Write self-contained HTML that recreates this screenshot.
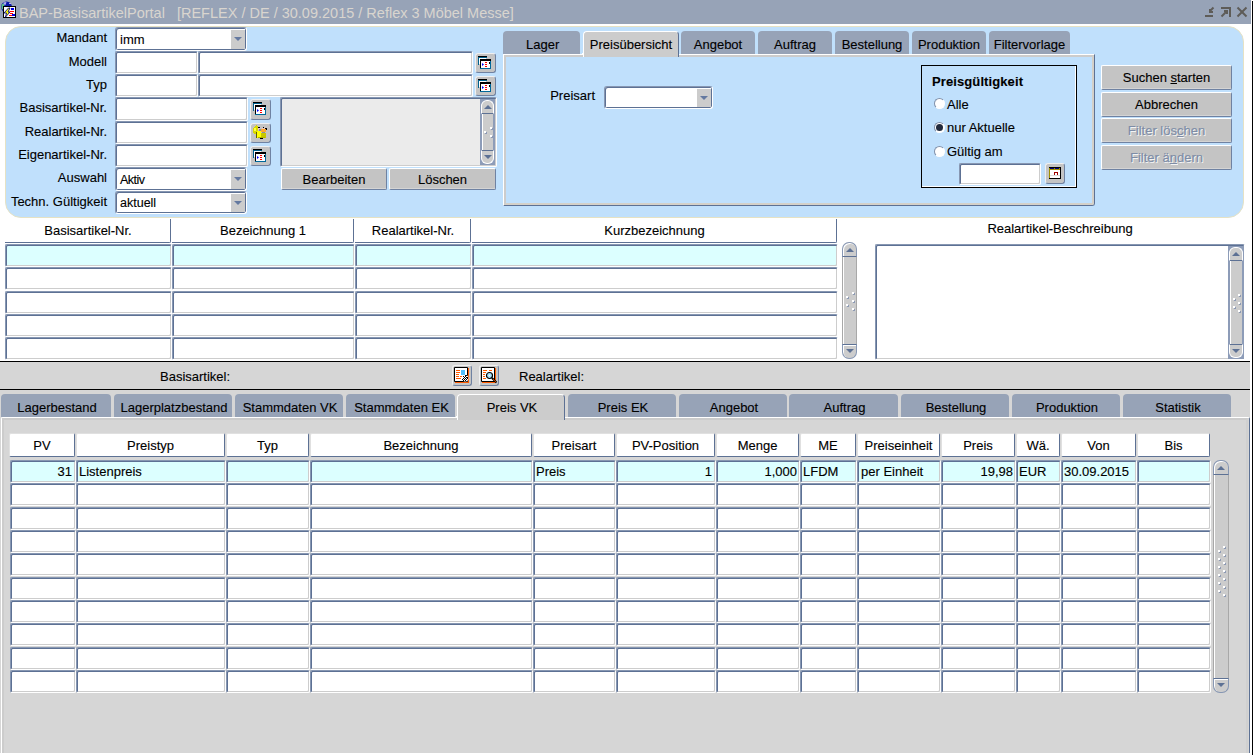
<!DOCTYPE html>
<html><head><meta charset="utf-8"><style>
*{margin:0;padding:0;box-sizing:content-box}
html,body{width:1253px;height:755px;overflow:hidden;background:#fff;position:relative}
body div{position:absolute}
.t{font-family:"Liberation Sans",sans-serif;font-size:13px;line-height:20px;white-space:pre;color:#000;-webkit-text-stroke:0.12px currentColor}
.fld{border-style:solid;border-width:1px;border-color:#8797b2 #fff #fff #8797b2;border-radius:2px;box-shadow:inset 1px 1px 0 #5d7194, inset -1px -1px 0 #cdcdcd}
.cmb{background:#fff;border-style:solid;border-width:1px;border-color:#8797b2 #fff #fff #8797b2;border-radius:3px;box-shadow:inset 1px 1px 0 #5d7194, inset -1px -1px 0 #5d7194}
.cbtn{right:1px;top:1px;width:14px;background:#cccccc}
.arr{left:3px;top:7px;width:0;height:0;border-left:4px solid transparent;border-right:4px solid transparent;border-top:4px solid #6479a0}
.btn{background:#c4c4c4;border:1px solid;border-color:#fff #6f82a2 #6f82a2 #fff;border-radius:2px;box-shadow:inset 0 -1px 0 #d4d4d4}
.ibtn{background:#c4c4c4;border:1px solid;border-color:#f0f0f0 #6f82a2 #6f82a2 #f0f0f0;border-radius:3px}
.tab{background:#97a3b7;border-radius:4px 4px 0 0}
.tabA{background:#cccccc;border-radius:4px 4px 0 0;border-style:solid;border-width:1px 1px 0 1px;border-color:#fff #5d7194 #fff #fff}
.vsu{background:#cccccc;border:1px solid #8797b3;border-bottom:1px solid #5d7194;border-radius:7px 7px 0 0;box-shadow:inset 1px 1px 0 #fff, 0 1px 0 #fff}
.vsd{background:#cccccc;border:1px solid #8797b3;border-top:1px solid #5d7194;border-radius:0 0 7px 7px;box-shadow:inset 1px 1px 0 #fff}
.vsuF{background:#cccccc;border:1px solid #fff;border-bottom:1px solid #5d7194;border-radius:6px 6px 0 0;box-shadow:0 1px 0 #fff}
.vsdF{background:#cccccc;border:1px solid #fff;border-top:1px solid #5d7194;border-radius:0 0 6px 6px}
.vst{background:#cccccc;border-left:1px solid #a8a8a8;border-right:1px solid #a8a8a8;box-shadow:inset 1px 0 0 #fff}
.au{width:0;height:0;border-left:4px solid transparent;border-right:4px solid transparent;border-bottom:4px solid #5d7194}
.ad{width:0;height:0;border-left:4px solid transparent;border-right:4px solid transparent;border-top:4px solid #5d7194}
u{text-decoration:underline;text-underline-offset:1px}
</style></head>
<body>
<div style="left:0px;top:0px;width:1251px;height:24px;background:#97a3b7"></div><div style="left:1251px;top:0px;width:1px;height:24px;background:#fff"></div><div style="left:1250px;top:24px;width:2px;height:731px;background:#fff"></div><div style="left:1252px;top:1px;width:1px;height:754px;background:#000"></div><svg width="20" height="20" style="position:absolute;left:0;top:0"><circle cx="6.5" cy="7" r="5.5" fill="#0a1aa8"/><path d="M1.5 5 Q2.5 3 4 3.5 L4.5 6 L3.5 10 L1.5 8.5 Z" fill="#5cc088"/><path d="M3.5 2.5 L6.5 2 L5.5 5 L4 4.5 Z" fill="#b8b0f0"/><rect x="9" y="3" width="2" height="1" fill="#b8b0f0"/><rect x="3" y="6" width="13" height="12" fill="#000"/><rect x="4" y="7" width="11" height="10" fill="#fff"/><path d="M8.5 8 L10 8 L8 12 L10 12 L5.5 17 L6.5 13 L4 13 Z" fill="#ffff00" stroke="#000080" stroke-width="0.9"/><rect x="11" y="8" width="3" height="2" fill="#0000e0"/><rect x="10" y="11" width="4" height="1" fill="#ff0000"/><rect x="10" y="13" width="3" height="1" fill="#ff0000"/><rect x="9" y="15" width="3" height="1" fill="#ff0000"/><rect x="12" y="14" width="3" height="2" fill="#0000e0"/></svg><div class="t" style="left:19px;top:3px;font-size:14.5px;color:#d9d5cf;font-weight:normal;-webkit-text-stroke:0">BAP-BasisartikelPortal &nbsp; [REFLEX / DE / 30.09.2015 / Reflex 3 Möbel Messe]</div><svg width="50" height="24" style="position:absolute;left:1200px;top:0"><g fill="#5e5c58"><rect x="5" y="15" width="8" height="2"/><rect x="9" y="9" width="2" height="4"/><rect x="9" y="11" width="4" height="2"/><rect x="21" y="7" width="10" height="2"/><rect x="29" y="7" width="2" height="10"/><rect x="24" y="10" width="4" height="2"/><rect x="26" y="10" width="2" height="4"/></g><g fill="none" stroke="#5e5c58" stroke-width="2"><path d="M13.5 7.5 L10 11"/><path d="M21.5 16.5 L27 11"/><path d="M37.5 7.5 L46.5 16.5"/><path d="M46.5 7.5 L37.5 16.5"/></g></svg><div style="left:5px;top:26px;width:1237px;height:190px;background:#c0e0fc;border:1px solid #e6e2c4;border-radius:16px"></div><div class="t" style="left:-193px;width:300px;text-align:right;top:28px;font-size:13px;color:#000;font-weight:normal;">Mandant</div><div class="t" style="left:-193px;width:300px;text-align:right;top:52px;font-size:13px;color:#000;font-weight:normal;">Modell</div><div class="t" style="left:-193px;width:300px;text-align:right;top:75px;font-size:13px;color:#000;font-weight:normal;">Typ</div><div class="t" style="left:-193px;width:300px;text-align:right;top:98px;font-size:13px;color:#000;font-weight:normal;">Basisartikel-Nr.</div><div class="t" style="left:-193px;width:300px;text-align:right;top:122px;font-size:13px;color:#000;font-weight:normal;">Realartikel-Nr.</div><div class="t" style="left:-193px;width:300px;text-align:right;top:145px;font-size:13px;color:#000;font-weight:normal;">Eigenartikel-Nr.</div><div class="t" style="left:-193px;width:300px;text-align:right;top:168px;font-size:13px;color:#000;font-weight:normal;">Auswahl</div><div class="t" style="left:-193px;width:300px;text-align:right;top:192px;font-size:13px;color:#000;font-weight:normal;">Techn. Gültigkeit</div><div class="cmb" style="left:115px;top:27px;width:130px;height:22px"><div class="cbtn" style="top:2px;right:1px;height:19px"><div class="arr"></div></div></div><div class="t" style="left:120px;top:30px;font-size:13px;color:#000;font-weight:normal;">imm</div><div class="fld" style="left:115px;top:51px;width:81px;height:21px;background:#fff"></div><div class="fld" style="left:198px;top:51px;width:273px;height:21px;background:#fff"></div><div class="fld" style="left:115px;top:74px;width:81px;height:21px;background:#fff"></div><div class="fld" style="left:198px;top:74px;width:273px;height:21px;background:#fff"></div><div class="ibtn" style="left:475px;top:53px;width:19px;height:18px"><svg width="21" height="21" style="position:absolute;left:-1px;top:-1px"><rect x="3" y="3" width="9" height="1" fill="#000"/><rect x="3" y="4" width="9" height="1" fill="#00608c"/><rect x="3" y="4" width="1" height="8" fill="#00608c"/><rect x="4" y="5" width="7" height="6" fill="#fff"/><rect x="5" y="6" width="11" height="2" fill="#000"/><rect x="5" y="8" width="11" height="8" fill="#00689a"/><rect x="5" y="8" width="1" height="7" fill="#000"/><rect x="6" y="8" width="8" height="7" fill="#fff"/><rect x="14" y="8" width="1" height="7" fill="#fff"/><rect x="14" y="9" width="1" height="2" fill="#000"/><path d="M7 10 L9 11.5 L7 13 Z" fill="#0000ff"/><rect x="10" y="9" width="2" height="1" fill="#f00"/><rect x="10" y="11" width="2" height="1" fill="#f00"/><rect x="10" y="13" width="2" height="1" fill="#f00"/></svg></div><div class="ibtn" style="left:475px;top:76px;width:19px;height:18px"><svg width="21" height="21" style="position:absolute;left:-1px;top:-1px"><rect x="3" y="3" width="9" height="1" fill="#000"/><rect x="3" y="4" width="9" height="1" fill="#00608c"/><rect x="3" y="4" width="1" height="8" fill="#00608c"/><rect x="4" y="5" width="7" height="6" fill="#fff"/><rect x="5" y="6" width="11" height="2" fill="#000"/><rect x="5" y="8" width="11" height="8" fill="#00689a"/><rect x="5" y="8" width="1" height="7" fill="#000"/><rect x="6" y="8" width="8" height="7" fill="#fff"/><rect x="14" y="8" width="1" height="7" fill="#fff"/><rect x="14" y="9" width="1" height="2" fill="#000"/><path d="M7 10 L9 11.5 L7 13 Z" fill="#0000ff"/><rect x="10" y="9" width="2" height="1" fill="#f00"/><rect x="10" y="11" width="2" height="1" fill="#f00"/><rect x="10" y="13" width="2" height="1" fill="#f00"/></svg></div><div class="fld" style="left:115px;top:97px;width:131px;height:22px;background:#fff"></div><div class="fld" style="left:115px;top:121px;width:131px;height:21px;background:#fff"></div><div class="fld" style="left:115px;top:144px;width:131px;height:21px;background:#fff"></div><div class="ibtn" style="left:250px;top:99px;width:19px;height:19px"><svg width="21" height="21" style="position:absolute;left:-1px;top:-1px"><rect x="3" y="3" width="9" height="1" fill="#000"/><rect x="3" y="4" width="9" height="1" fill="#00608c"/><rect x="3" y="4" width="1" height="8" fill="#00608c"/><rect x="4" y="5" width="7" height="6" fill="#fff"/><rect x="5" y="6" width="11" height="2" fill="#000"/><rect x="5" y="8" width="11" height="8" fill="#00689a"/><rect x="5" y="8" width="1" height="7" fill="#000"/><rect x="6" y="8" width="8" height="7" fill="#fff"/><rect x="14" y="8" width="1" height="7" fill="#fff"/><rect x="14" y="9" width="1" height="2" fill="#000"/><path d="M7 10 L9 11.5 L7 13 Z" fill="#0000ff"/><rect x="10" y="9" width="2" height="1" fill="#f00"/><rect x="10" y="11" width="2" height="1" fill="#f00"/><rect x="10" y="13" width="2" height="1" fill="#f00"/></svg></div><div class="ibtn" style="left:250px;top:123px;width:19px;height:18px"><svg width="21" height="21" style="position:absolute;left:-1px;top:-1px" shape-rendering="crispEdges"><g fill="#d8d800"><rect x="6" y="2" width="1" height="1"/><rect x="5" y="3" width="3" height="1"/><rect x="4" y="4" width="4" height="1"/><rect x="3" y="5" width="5" height="4"/><rect x="3" y="9" width="3" height="1"/><rect x="4" y="10" width="2" height="1"/></g><rect x="4" y="5" width="2" height="3" fill="#ffff40"/><rect x="8" y="4" width="2" height="1" fill="#000"/><rect x="8" y="5" width="2" height="2" fill="#f8c8b8"/><rect x="13" y="4" width="1" height="1" fill="#000"/><rect x="12" y="5" width="3" height="1" fill="#f8c8b8"/><rect x="15" y="5" width="2" height="1" fill="#000"/><rect x="11" y="6" width="5" height="3" fill="#ffa830"/><rect x="16" y="6" width="1" height="1" fill="#000"/><rect x="9" y="6" width="2" height="3" fill="#8890a0"/><rect x="12" y="9" width="3" height="1" fill="#8890a0"/><rect x="7" y="8" width="4" height="7" fill="#ffff00"/><rect x="11" y="10" width="5" height="5" fill="#c8c800"/><rect x="8" y="14" width="7" height="1" fill="#b0b000"/><rect x="10" y="15" width="3" height="1" fill="#000"/><rect x="6" y="9" width="1" height="6" fill="#606000"/></svg></div><div class="ibtn" style="left:250px;top:146px;width:19px;height:18px"><svg width="21" height="21" style="position:absolute;left:-1px;top:-1px"><rect x="3" y="3" width="9" height="1" fill="#000"/><rect x="3" y="4" width="9" height="1" fill="#00608c"/><rect x="3" y="4" width="1" height="8" fill="#00608c"/><rect x="4" y="5" width="7" height="6" fill="#fff"/><rect x="5" y="6" width="11" height="2" fill="#000"/><rect x="5" y="8" width="11" height="8" fill="#00689a"/><rect x="5" y="8" width="1" height="7" fill="#000"/><rect x="6" y="8" width="8" height="7" fill="#fff"/><rect x="14" y="8" width="1" height="7" fill="#fff"/><rect x="14" y="9" width="1" height="2" fill="#000"/><path d="M7 10 L9 11.5 L7 13 Z" fill="#0000ff"/><rect x="10" y="9" width="2" height="1" fill="#f00"/><rect x="10" y="11" width="2" height="1" fill="#f00"/><rect x="10" y="13" width="2" height="1" fill="#f00"/></svg></div><div class="cmb" style="left:115px;top:167px;width:130px;height:22px"><div class="cbtn" style="top:2px;right:1px;height:19px"><div class="arr"></div></div></div><div class="cmb" style="left:115px;top:191px;width:130px;height:21px"><div class="cbtn" style="top:2px;right:1px;height:18px"><div class="arr"></div></div></div><div class="t" style="left:120px;top:170px;font-size:12.5px;color:#000;font-weight:normal;letter-spacing:-0.5px">Aktiv</div><div class="t" style="left:120px;top:193px;font-size:12.5px;color:#000;font-weight:normal;">aktuell</div><div class="fld" style="left:280px;top:97px;width:215px;height:68px;background:#ebebeb"></div><div style="left:480px;top:99px;width:15px;height:66px;background:#8d9cb8"></div><div class="vsuF" style="left:481px;top:100px;width:11px;height:12px"></div><div class="vst" style="left:481px;top:114px;width:11px;height:36px;border-color:#8d9cb8"></div><div class="vsdF" style="left:481px;top:150px;width:11px;height:12px"></div><div class="au" style="left:484px;top:105px"></div><div class="ad" style="left:484px;top:155px"></div><div style="left:490px;top:127px;width:2px;height:2px;background:#fff;box-shadow:1px 1px 0 #8d9ab4"></div><div style="left:484px;top:131px;width:2px;height:2px;background:#fff;box-shadow:1px 1px 0 #8d9ab4"></div><div style="left:490px;top:135px;width:2px;height:2px;background:#fff;box-shadow:1px 1px 0 #8d9ab4"></div><div class="btn" style="left:281px;top:168px;width:104px;height:20px"></div><div class="t" style="left:281px;width:106px;text-align:center;top:170px;font-size:13px;color:#000;font-weight:normal;">Bearbeiten</div><div class="btn" style="left:389px;top:168px;width:105px;height:20px"></div><div class="t" style="left:389px;width:107px;text-align:center;top:170px;font-size:13px;color:#000;font-weight:normal;">Löschen</div><div class="tab" style="left:503px;top:31px;width:77px;height:23px"></div><div class="tab" style="left:681px;top:31px;width:74px;height:23px"></div><div class="tab" style="left:758px;top:31px;width:74px;height:23px"></div><div class="tab" style="left:835px;top:31px;width:74px;height:23px"></div><div class="tab" style="left:912px;top:31px;width:74px;height:23px"></div><div class="tab" style="left:989px;top:31px;width:81px;height:23px"></div><div style="left:503px;top:54px;width:590px;height:150px;border-style:solid;border-width:1px;border-color:#fff #5d7194 #5d7194 #fff;border-radius:0 0 3px 0"></div><div style="left:504px;top:55px;width:586px;height:146px;background:#c0e0fc;border-style:solid;border-width:2px;border-color:#cccccc #d4d0c8 #d4d0c8 #cccccc;border-radius:0 0 2px 0"></div><div class="tabA" style="left:583px;top:31px;width:94px;height:25px"></div><div style="left:582px;top:53px;width:1px;height:1px;background:#fff"></div><div style="left:678px;top:52px;width:1px;height:2px;background:#5d7194"></div><div class="t" style="left:526px;top:35px;font-size:13px;color:#000;font-weight:normal;">Lager</div><div class="t" style="left:584px;width:94px;text-align:center;top:35px;font-size:13px;color:#000;font-weight:normal;">Preisübersicht</div><div class="t" style="left:681px;width:74px;text-align:center;top:35px;font-size:13px;color:#000;font-weight:normal;">Angebot</div><div class="t" style="left:758px;width:74px;text-align:center;top:35px;font-size:13px;color:#000;font-weight:normal;">Auftrag</div><div class="t" style="left:835px;width:74px;text-align:center;top:35px;font-size:13px;color:#000;font-weight:normal;">Bestellung</div><div class="t" style="left:912px;width:74px;text-align:center;top:35px;font-size:13px;color:#000;font-weight:normal;">Produktion</div><div class="t" style="left:989px;width:81px;text-align:center;top:35px;font-size:13px;color:#000;font-weight:normal;">Filtervorlage</div><div class="t" style="left:295px;width:300px;text-align:right;top:86px;font-size:13px;color:#000;font-weight:normal;">Preisart</div><div class="cmb" style="left:604px;top:86px;width:107px;height:21px"><div class="cbtn" style="top:2px;right:1px;height:18px"><div class="arr"></div></div></div><div style="left:921px;top:65px;width:154px;height:121px;border:1px solid #000;box-shadow:inset -1px -1px 0 #fff"></div><div class="t" style="left:932px;top:72px;font-size:13px;color:#000;font-weight:bold;letter-spacing:0.1px">Preisgültigkeit</div><div style="left:934px;top:98px;width:9px;height:9px;border-radius:50%;background:#fff;border:1px solid;border-color:#8090aa #fff #fff #8090aa"></div><div class="t" style="left:947px;top:94.5px;font-size:13px;color:#000;font-weight:normal;">Alle</div><div style="left:934px;top:122px;width:9px;height:9px;border-radius:50%;background:#fff;border:1px solid;border-color:#8090aa #fff #fff #8090aa"></div><div style="left:936px;top:124px;width:7px;height:7px;border-radius:50%;background:#222a3c"></div><div class="t" style="left:947px;top:117.5px;font-size:13px;color:#000;font-weight:normal;">nur Aktuelle</div><div style="left:934px;top:146px;width:9px;height:9px;border-radius:50%;background:#fff;border:1px solid;border-color:#8090aa #fff #fff #8090aa"></div><div class="t" style="left:947px;top:141.5px;font-size:13px;color:#000;font-weight:normal;">Gültig am</div><div class="fld" style="left:959px;top:163px;width:80px;height:20px;background:#fff"></div><div class="ibtn" style="left:1045px;top:163px;width:18px;height:19px"><svg width="20" height="21" style="position:absolute;left:-1px;top:-1px"><rect x="4" y="4" width="12" height="12" fill="#000"/><rect x="4" y="5" width="11" height="10" fill="#fff"/><rect x="4" y="5" width="1" height="10" fill="#a09000"/><rect x="5" y="5" width="10" height="2" fill="#a09000"/><rect x="5" y="5" width="4" height="1" fill="#000080"/><rect x="10" y="5" width="4" height="1" fill="#000080"/><rect x="9" y="9" width="4" height="4" fill="#a00000"/><rect x="10" y="10" width="2" height="2" fill="#fff"/><rect x="5" y="12" width="10" height="1" fill="#dddddd"/></svg></div><div class="btn" style="left:1101px;top:65px;width:129px;height:23px"></div><div class="t" style="left:1101px;width:131px;text-align:center;top:68px;font-size:13px;color:#000;font-weight:normal;">Suchen <u>s</u>tarten</div><div class="btn" style="left:1101px;top:92px;width:129px;height:23px"></div><div class="t" style="left:1101px;width:131px;text-align:center;top:95px;font-size:13px;color:#000;font-weight:normal;">Abbrechen</div><div class="btn" style="left:1101px;top:118px;width:129px;height:23px"></div><div class="t" style="left:1101px;width:131px;text-align:center;top:121px;font-size:13px;color:#7d8ca6;font-weight:normal;text-shadow:1px 1px 0 #f4f4f4;">Filter lös<u>c</u>hen</div><div class="btn" style="left:1101px;top:145px;width:129px;height:23px"></div><div class="t" style="left:1101px;width:131px;text-align:center;top:148px;font-size:13px;color:#7d8ca6;font-weight:normal;text-shadow:1px 1px 0 #f4f4f4;">Filter ä<u>n</u>dern</div><div style="left:5px;top:219px;width:165px;height:23px;border-right:1px solid #5d7194;border-bottom:1px solid #5d7194;border-radius:0 0 2px 0"></div><div class="t" style="left:5px;width:166px;text-align:center;top:221px;font-size:13px;color:#000;font-weight:normal;">Basisartikel-Nr.</div><div style="left:172px;top:219px;width:181px;height:23px;border-right:1px solid #5d7194;border-bottom:1px solid #5d7194;border-radius:0 0 2px 0"></div><div class="t" style="left:172px;width:182px;text-align:center;top:221px;font-size:13px;color:#000;font-weight:normal;">Bezeichnung 1</div><div style="left:355px;top:219px;width:115px;height:23px;border-right:1px solid #5d7194;border-bottom:1px solid #5d7194;border-radius:0 0 2px 0"></div><div class="t" style="left:355px;width:116px;text-align:center;top:221px;font-size:13px;color:#000;font-weight:normal;">Realartikel-Nr.</div><div style="left:472px;top:219px;width:364px;height:23px;border-right:1px solid #5d7194;border-bottom:1px solid #5d7194;border-radius:0 0 2px 0"></div><div class="t" style="left:472px;width:365px;text-align:center;top:221px;font-size:13px;color:#000;font-weight:normal;">Kurzbezeichnung</div><div class="fld" style="left:5px;top:244px;width:165px;height:21px;background:#dcffff"></div><div class="fld" style="left:172px;top:244px;width:181px;height:21px;background:#dcffff"></div><div class="fld" style="left:355px;top:244px;width:115px;height:21px;background:#dcffff"></div><div class="fld" style="left:472px;top:244px;width:364px;height:21px;background:#dcffff"></div><div class="fld" style="left:5px;top:267px;width:165px;height:21px;background:#fff"></div><div class="fld" style="left:172px;top:267px;width:181px;height:21px;background:#fff"></div><div class="fld" style="left:355px;top:267px;width:115px;height:21px;background:#fff"></div><div class="fld" style="left:472px;top:267px;width:364px;height:21px;background:#fff"></div><div class="fld" style="left:5px;top:291px;width:165px;height:21px;background:#fff"></div><div class="fld" style="left:172px;top:291px;width:181px;height:21px;background:#fff"></div><div class="fld" style="left:355px;top:291px;width:115px;height:21px;background:#fff"></div><div class="fld" style="left:472px;top:291px;width:364px;height:21px;background:#fff"></div><div class="fld" style="left:5px;top:314px;width:165px;height:21px;background:#fff"></div><div class="fld" style="left:172px;top:314px;width:181px;height:21px;background:#fff"></div><div class="fld" style="left:355px;top:314px;width:115px;height:21px;background:#fff"></div><div class="fld" style="left:472px;top:314px;width:364px;height:21px;background:#fff"></div><div class="fld" style="left:5px;top:337px;width:165px;height:21px;background:#fff"></div><div class="fld" style="left:172px;top:337px;width:181px;height:21px;background:#fff"></div><div class="fld" style="left:355px;top:337px;width:115px;height:21px;background:#fff"></div><div class="fld" style="left:472px;top:337px;width:364px;height:21px;background:#fff"></div><div class="vsu" style="left:842px;top:242px;width:13px;height:13px"></div><div class="vst" style="left:842px;top:257px;width:13px;height:87px"></div><div class="vsd" style="left:842px;top:344px;width:13px;height:13px"></div><div class="au" style="left:846px;top:248px"></div><div class="ad" style="left:846px;top:349px"></div><div style="left:852px;top:292px;width:2px;height:2px;background:#fff;box-shadow:1px 1px 0 #8d9ab4"></div><div style="left:846px;top:296px;width:2px;height:2px;background:#fff;box-shadow:1px 1px 0 #8d9ab4"></div><div style="left:852px;top:300px;width:2px;height:2px;background:#fff;box-shadow:1px 1px 0 #8d9ab4"></div><div style="left:846px;top:304px;width:2px;height:2px;background:#fff;box-shadow:1px 1px 0 #8d9ab4"></div><div style="left:852px;top:308px;width:2px;height:2px;background:#fff;box-shadow:1px 1px 0 #8d9ab4"></div><div class="t" style="left:876px;width:368px;text-align:center;top:219px;font-size:13px;color:#000;font-weight:normal;">Realartikel-Beschreibung</div><div class="fld" style="left:875px;top:244px;width:368px;height:114px;background:#fff"></div><div style="left:1228px;top:246px;width:16px;height:113px;background:#8d9cb8"></div><div class="vsuF" style="left:1229px;top:247px;width:12px;height:12px"></div><div class="vst" style="left:1229px;top:261px;width:12px;height:83px;border-color:#8d9cb8"></div><div class="vsdF" style="left:1229px;top:344px;width:12px;height:12px"></div><div class="au" style="left:1232px;top:252px"></div><div class="ad" style="left:1232px;top:349px"></div><div style="left:1238px;top:294px;width:2px;height:2px;background:#fff;box-shadow:1px 1px 0 #8d9ab4"></div><div style="left:1233px;top:298px;width:2px;height:2px;background:#fff;box-shadow:1px 1px 0 #8d9ab4"></div><div style="left:1238px;top:302px;width:2px;height:2px;background:#fff;box-shadow:1px 1px 0 #8d9ab4"></div><div style="left:1233px;top:306px;width:2px;height:2px;background:#fff;box-shadow:1px 1px 0 #8d9ab4"></div><div style="left:1238px;top:310px;width:2px;height:2px;background:#fff;box-shadow:1px 1px 0 #8d9ab4"></div><div style="left:0px;top:361px;width:1250px;height:394px;background:#d6d6d6"></div><div style="left:0px;top:361px;width:1250px;height:1px;background:#000"></div><div style="left:0px;top:389px;width:1250px;height:1px;background:#000"></div><div class="t" style="left:160px;top:367px;font-size:13px;color:#000;font-weight:normal;">Basisartikel:</div><div class="ibtn" style="left:452px;top:365px;width:18px;height:19px"><svg width="20" height="21" style="position:absolute;left:-1px;top:-1px"><rect x="2" y="2" width="14" height="15" rx="1" fill="#000"/><rect x="3" y="3" width="12" height="13" fill="#fff"/><rect x="16" y="3" width="1" height="15" fill="#ff5a00"/><rect x="3" y="17" width="14" height="1" fill="#ff5a00"/><rect x="4" y="5" width="4" height="1" fill="#ff5a00"/><rect x="4" y="7" width="4" height="1" fill="#ff5a00"/><rect x="4" y="9" width="3" height="1" fill="#ff5a00"/><rect x="4" y="11" width="3" height="1" fill="#ff5a00"/><rect x="8" y="11" width="2" height="1" fill="#ff5a00"/><rect x="4" y="13" width="5" height="1" fill="#ff5a00"/><rect x="9" y="5" width="4" height="5" fill="#50c0ff"/><circle cx="13.2" cy="13.2" r="3.2" fill="#fff"/><g fill="#000"><rect x="11" y="11" width="1" height="1"/><rect x="13" y="11" width="1" height="1"/><rect x="12" y="12" width="1" height="1"/><rect x="14" y="12" width="1" height="1"/><rect x="11" y="13" width="1" height="1"/><rect x="13" y="13" width="1" height="1"/><rect x="10" y="14" width="1" height="1"/><rect x="12" y="14" width="1" height="1"/><rect x="14" y="14" width="1" height="1"/><rect x="11" y="15" width="1" height="1"/><rect x="13" y="15" width="1" height="1"/><rect x="13" y="10" width="2" height="1"/><rect x="15" y="12" width="1" height="2"/></g></svg></div><div class="ibtn" style="left:479px;top:365px;width:18px;height:19px"><svg width="20" height="21" style="position:absolute;left:-1px;top:-1px"><rect x="2" y="2" width="14" height="15" rx="1" fill="#000"/><rect x="3" y="3" width="12" height="13" fill="#fff"/><rect x="16" y="3" width="1" height="15" fill="#ff5a00"/><rect x="3" y="17" width="14" height="1" fill="#ff5a00"/><rect x="4" y="5" width="4" height="1" fill="#ff5a00"/><rect x="10" y="5" width="3" height="1" fill="#ff5a00"/><rect x="4" y="7" width="3" height="1" fill="#ff5a00"/><rect x="4" y="9" width="2" height="1" fill="#ff5a00"/><rect x="4" y="11" width="2" height="1" fill="#ff5a00"/><rect x="4" y="13" width="3" height="1" fill="#ff5a00"/><circle cx="10.5" cy="10.5" r="3" fill="#a8e4ff" stroke="#000" stroke-width="1.2"/><rect x="10" y="10" width="1" height="1" fill="#fff"/><path d="M13 13 L17.5 17.5" stroke="#000" stroke-width="1.8"/><path d="M14 14 L17 17" stroke="#ff5a00" stroke-width="0.7"/></svg></div><div class="t" style="left:519px;top:367px;font-size:13px;color:#000;font-weight:normal;">Realartikel:</div><div class="tab" style="left:1px;top:394px;width:110px;height:23px"></div><div class="tab" style="left:114px;top:394px;width:118px;height:23px"></div><div class="tab" style="left:235px;top:394px;width:108px;height:23px"></div><div class="tab" style="left:346px;top:394px;width:109px;height:23px"></div><div class="tab" style="left:568px;top:394px;width:108px;height:23px"></div><div class="tab" style="left:679px;top:394px;width:108px;height:23px"></div><div class="tab" style="left:789px;top:394px;width:109px;height:23px"></div><div class="tab" style="left:901px;top:394px;width:108px;height:23px"></div><div class="tab" style="left:1012px;top:394px;width:108px;height:23px"></div><div class="tab" style="left:1123px;top:394px;width:108px;height:23px"></div><div style="left:1px;top:417px;width:1247px;height:335px;border-style:solid;border-width:1px 1px 0 1px;border-color:#fff #5d7194 #fff #fff;border-radius:2px 2px 0 0"></div><div style="left:2px;top:418px;width:1242px;height:333px;background:#d6d6d6;border-style:solid;border-width:2px 2px 1px 2px;border-color:#cccccc #d0d0d0 #d0d0d0 #cccccc"></div><div style="left:0px;top:753px;width:1250px;height:2px;background:#fff"></div><div class="tabA" style="left:457px;top:394px;width:106px;height:25px"></div><div style="left:456px;top:416px;width:1px;height:1px;background:#fff"></div><div style="left:564px;top:415px;width:1px;height:2px;background:#5d7194"></div><div class="t" style="left:2px;width:110px;text-align:center;top:398px;font-size:13px;color:#000;font-weight:normal;">Lagerbestand</div><div class="t" style="left:115px;width:118px;text-align:center;top:398px;font-size:13px;color:#000;font-weight:normal;">Lagerplatzbestand</div><div class="t" style="left:236px;width:108px;text-align:center;top:398px;font-size:13px;color:#000;font-weight:normal;">Stammdaten VK</div><div class="t" style="left:347px;width:109px;text-align:center;top:398px;font-size:13px;color:#000;font-weight:normal;">Stammdaten EK</div><div class="t" style="left:458px;width:108px;text-align:center;top:398px;font-size:13px;color:#000;font-weight:normal;">Preis VK</div><div class="t" style="left:569px;width:108px;text-align:center;top:398px;font-size:13px;color:#000;font-weight:normal;">Preis EK</div><div class="t" style="left:680px;width:108px;text-align:center;top:398px;font-size:13px;color:#000;font-weight:normal;">Angebot</div><div class="t" style="left:790px;width:109px;text-align:center;top:398px;font-size:13px;color:#000;font-weight:normal;">Auftrag</div><div class="t" style="left:902px;width:108px;text-align:center;top:398px;font-size:13px;color:#000;font-weight:normal;">Bestellung</div><div class="t" style="left:1013px;width:108px;text-align:center;top:398px;font-size:13px;color:#000;font-weight:normal;">Produktion</div><div class="t" style="left:1124px;width:108px;text-align:center;top:398px;font-size:13px;color:#000;font-weight:normal;">Statistik</div><div style="left:9px;top:433px;width:64px;height:22px;background:#fff;border:1px solid;border-color:#e0e0e0 #5d7194 #5d7194 #e0e0e0;border-radius:2px"></div><div class="t" style="left:9px;width:66px;text-align:center;top:436px;font-size:13px;color:#000;font-weight:normal;">PV</div><div style="left:76px;top:433px;width:147px;height:22px;background:#fff;border:1px solid;border-color:#e0e0e0 #5d7194 #5d7194 #e0e0e0;border-radius:2px"></div><div class="t" style="left:76px;width:149px;text-align:center;top:436px;font-size:13px;color:#000;font-weight:normal;">Preistyp</div><div style="left:226px;top:433px;width:81px;height:22px;background:#fff;border:1px solid;border-color:#e0e0e0 #5d7194 #5d7194 #e0e0e0;border-radius:2px"></div><div class="t" style="left:226px;width:83px;text-align:center;top:436px;font-size:13px;color:#000;font-weight:normal;">Typ</div><div style="left:310px;top:433px;width:220px;height:22px;background:#fff;border:1px solid;border-color:#e0e0e0 #5d7194 #5d7194 #e0e0e0;border-radius:2px"></div><div class="t" style="left:310px;width:222px;text-align:center;top:436px;font-size:13px;color:#000;font-weight:normal;">Bezeichnung</div><div style="left:533px;top:433px;width:80px;height:22px;background:#fff;border:1px solid;border-color:#e0e0e0 #5d7194 #5d7194 #e0e0e0;border-radius:2px"></div><div class="t" style="left:533px;width:82px;text-align:center;top:436px;font-size:13px;color:#000;font-weight:normal;">Preisart</div><div style="left:616px;top:433px;width:97px;height:22px;background:#fff;border:1px solid;border-color:#e0e0e0 #5d7194 #5d7194 #e0e0e0;border-radius:2px"></div><div class="t" style="left:616px;width:99px;text-align:center;top:436px;font-size:13px;color:#000;font-weight:normal;">PV-Position</div><div style="left:716px;top:433px;width:81px;height:22px;background:#fff;border:1px solid;border-color:#e0e0e0 #5d7194 #5d7194 #e0e0e0;border-radius:2px"></div><div class="t" style="left:716px;width:83px;text-align:center;top:436px;font-size:13px;color:#000;font-weight:normal;">Menge</div><div style="left:800px;top:433px;width:54px;height:22px;background:#fff;border:1px solid;border-color:#e0e0e0 #5d7194 #5d7194 #e0e0e0;border-radius:2px"></div><div class="t" style="left:800px;width:56px;text-align:center;top:436px;font-size:13px;color:#000;font-weight:normal;">ME</div><div style="left:857px;top:433px;width:81px;height:22px;background:#fff;border:1px solid;border-color:#e0e0e0 #5d7194 #5d7194 #e0e0e0;border-radius:2px"></div><div class="t" style="left:857px;width:83px;text-align:center;top:436px;font-size:13px;color:#000;font-weight:normal;">Preiseinheit</div><div style="left:941px;top:433px;width:72px;height:22px;background:#fff;border:1px solid;border-color:#e0e0e0 #5d7194 #5d7194 #e0e0e0;border-radius:2px"></div><div class="t" style="left:941px;width:74px;text-align:center;top:436px;font-size:13px;color:#000;font-weight:normal;">Preis</div><div style="left:1016px;top:433px;width:42px;height:22px;background:#fff;border:1px solid;border-color:#e0e0e0 #5d7194 #5d7194 #e0e0e0;border-radius:2px"></div><div class="t" style="left:1016px;width:44px;text-align:center;top:436px;font-size:13px;color:#000;font-weight:normal;">Wä.</div><div style="left:1061px;top:433px;width:73px;height:22px;background:#fff;border:1px solid;border-color:#e0e0e0 #5d7194 #5d7194 #e0e0e0;border-radius:2px"></div><div class="t" style="left:1061px;width:75px;text-align:center;top:436px;font-size:13px;color:#000;font-weight:normal;">Von</div><div style="left:1137px;top:433px;width:71px;height:22px;background:#fff;border:1px solid;border-color:#e0e0e0 #5d7194 #5d7194 #e0e0e0;border-radius:2px"></div><div class="t" style="left:1137px;width:73px;text-align:center;top:436px;font-size:13px;color:#000;font-weight:normal;">Bis</div><div class="fld" style="left:10px;top:460px;width:64px;height:21px;background:#dcffff"></div><div class="fld" style="left:76px;top:460px;width:148px;height:21px;background:#dcffff"></div><div class="fld" style="left:226px;top:460px;width:82px;height:21px;background:#dcffff"></div><div class="fld" style="left:310px;top:460px;width:221px;height:21px;background:#dcffff"></div><div class="fld" style="left:533px;top:460px;width:81px;height:21px;background:#dcffff"></div><div class="fld" style="left:616px;top:460px;width:98px;height:21px;background:#dcffff"></div><div class="fld" style="left:716px;top:460px;width:82px;height:21px;background:#dcffff"></div><div class="fld" style="left:800px;top:460px;width:55px;height:21px;background:#dcffff"></div><div class="fld" style="left:857px;top:460px;width:82px;height:21px;background:#dcffff"></div><div class="fld" style="left:941px;top:460px;width:73px;height:21px;background:#dcffff"></div><div class="fld" style="left:1016px;top:460px;width:43px;height:21px;background:#dcffff"></div><div class="fld" style="left:1061px;top:460px;width:74px;height:21px;background:#dcffff"></div><div class="fld" style="left:1137px;top:460px;width:72px;height:21px;background:#dcffff"></div><div class="fld" style="left:10px;top:483px;width:64px;height:21px;background:#fff"></div><div class="fld" style="left:76px;top:483px;width:148px;height:21px;background:#fff"></div><div class="fld" style="left:226px;top:483px;width:82px;height:21px;background:#fff"></div><div class="fld" style="left:310px;top:483px;width:221px;height:21px;background:#fff"></div><div class="fld" style="left:533px;top:483px;width:81px;height:21px;background:#fff"></div><div class="fld" style="left:616px;top:483px;width:98px;height:21px;background:#fff"></div><div class="fld" style="left:716px;top:483px;width:82px;height:21px;background:#fff"></div><div class="fld" style="left:800px;top:483px;width:55px;height:21px;background:#fff"></div><div class="fld" style="left:857px;top:483px;width:82px;height:21px;background:#fff"></div><div class="fld" style="left:941px;top:483px;width:73px;height:21px;background:#fff"></div><div class="fld" style="left:1016px;top:483px;width:43px;height:21px;background:#fff"></div><div class="fld" style="left:1061px;top:483px;width:74px;height:21px;background:#fff"></div><div class="fld" style="left:1137px;top:483px;width:72px;height:21px;background:#fff"></div><div class="fld" style="left:10px;top:507px;width:64px;height:21px;background:#fff"></div><div class="fld" style="left:76px;top:507px;width:148px;height:21px;background:#fff"></div><div class="fld" style="left:226px;top:507px;width:82px;height:21px;background:#fff"></div><div class="fld" style="left:310px;top:507px;width:221px;height:21px;background:#fff"></div><div class="fld" style="left:533px;top:507px;width:81px;height:21px;background:#fff"></div><div class="fld" style="left:616px;top:507px;width:98px;height:21px;background:#fff"></div><div class="fld" style="left:716px;top:507px;width:82px;height:21px;background:#fff"></div><div class="fld" style="left:800px;top:507px;width:55px;height:21px;background:#fff"></div><div class="fld" style="left:857px;top:507px;width:82px;height:21px;background:#fff"></div><div class="fld" style="left:941px;top:507px;width:73px;height:21px;background:#fff"></div><div class="fld" style="left:1016px;top:507px;width:43px;height:21px;background:#fff"></div><div class="fld" style="left:1061px;top:507px;width:74px;height:21px;background:#fff"></div><div class="fld" style="left:1137px;top:507px;width:72px;height:21px;background:#fff"></div><div class="fld" style="left:10px;top:530px;width:64px;height:21px;background:#fff"></div><div class="fld" style="left:76px;top:530px;width:148px;height:21px;background:#fff"></div><div class="fld" style="left:226px;top:530px;width:82px;height:21px;background:#fff"></div><div class="fld" style="left:310px;top:530px;width:221px;height:21px;background:#fff"></div><div class="fld" style="left:533px;top:530px;width:81px;height:21px;background:#fff"></div><div class="fld" style="left:616px;top:530px;width:98px;height:21px;background:#fff"></div><div class="fld" style="left:716px;top:530px;width:82px;height:21px;background:#fff"></div><div class="fld" style="left:800px;top:530px;width:55px;height:21px;background:#fff"></div><div class="fld" style="left:857px;top:530px;width:82px;height:21px;background:#fff"></div><div class="fld" style="left:941px;top:530px;width:73px;height:21px;background:#fff"></div><div class="fld" style="left:1016px;top:530px;width:43px;height:21px;background:#fff"></div><div class="fld" style="left:1061px;top:530px;width:74px;height:21px;background:#fff"></div><div class="fld" style="left:1137px;top:530px;width:72px;height:21px;background:#fff"></div><div class="fld" style="left:10px;top:553px;width:64px;height:21px;background:#fff"></div><div class="fld" style="left:76px;top:553px;width:148px;height:21px;background:#fff"></div><div class="fld" style="left:226px;top:553px;width:82px;height:21px;background:#fff"></div><div class="fld" style="left:310px;top:553px;width:221px;height:21px;background:#fff"></div><div class="fld" style="left:533px;top:553px;width:81px;height:21px;background:#fff"></div><div class="fld" style="left:616px;top:553px;width:98px;height:21px;background:#fff"></div><div class="fld" style="left:716px;top:553px;width:82px;height:21px;background:#fff"></div><div class="fld" style="left:800px;top:553px;width:55px;height:21px;background:#fff"></div><div class="fld" style="left:857px;top:553px;width:82px;height:21px;background:#fff"></div><div class="fld" style="left:941px;top:553px;width:73px;height:21px;background:#fff"></div><div class="fld" style="left:1016px;top:553px;width:43px;height:21px;background:#fff"></div><div class="fld" style="left:1061px;top:553px;width:74px;height:21px;background:#fff"></div><div class="fld" style="left:1137px;top:553px;width:72px;height:21px;background:#fff"></div><div class="fld" style="left:10px;top:577px;width:64px;height:21px;background:#fff"></div><div class="fld" style="left:76px;top:577px;width:148px;height:21px;background:#fff"></div><div class="fld" style="left:226px;top:577px;width:82px;height:21px;background:#fff"></div><div class="fld" style="left:310px;top:577px;width:221px;height:21px;background:#fff"></div><div class="fld" style="left:533px;top:577px;width:81px;height:21px;background:#fff"></div><div class="fld" style="left:616px;top:577px;width:98px;height:21px;background:#fff"></div><div class="fld" style="left:716px;top:577px;width:82px;height:21px;background:#fff"></div><div class="fld" style="left:800px;top:577px;width:55px;height:21px;background:#fff"></div><div class="fld" style="left:857px;top:577px;width:82px;height:21px;background:#fff"></div><div class="fld" style="left:941px;top:577px;width:73px;height:21px;background:#fff"></div><div class="fld" style="left:1016px;top:577px;width:43px;height:21px;background:#fff"></div><div class="fld" style="left:1061px;top:577px;width:74px;height:21px;background:#fff"></div><div class="fld" style="left:1137px;top:577px;width:72px;height:21px;background:#fff"></div><div class="fld" style="left:10px;top:600px;width:64px;height:21px;background:#fff"></div><div class="fld" style="left:76px;top:600px;width:148px;height:21px;background:#fff"></div><div class="fld" style="left:226px;top:600px;width:82px;height:21px;background:#fff"></div><div class="fld" style="left:310px;top:600px;width:221px;height:21px;background:#fff"></div><div class="fld" style="left:533px;top:600px;width:81px;height:21px;background:#fff"></div><div class="fld" style="left:616px;top:600px;width:98px;height:21px;background:#fff"></div><div class="fld" style="left:716px;top:600px;width:82px;height:21px;background:#fff"></div><div class="fld" style="left:800px;top:600px;width:55px;height:21px;background:#fff"></div><div class="fld" style="left:857px;top:600px;width:82px;height:21px;background:#fff"></div><div class="fld" style="left:941px;top:600px;width:73px;height:21px;background:#fff"></div><div class="fld" style="left:1016px;top:600px;width:43px;height:21px;background:#fff"></div><div class="fld" style="left:1061px;top:600px;width:74px;height:21px;background:#fff"></div><div class="fld" style="left:1137px;top:600px;width:72px;height:21px;background:#fff"></div><div class="fld" style="left:10px;top:623px;width:64px;height:21px;background:#fff"></div><div class="fld" style="left:76px;top:623px;width:148px;height:21px;background:#fff"></div><div class="fld" style="left:226px;top:623px;width:82px;height:21px;background:#fff"></div><div class="fld" style="left:310px;top:623px;width:221px;height:21px;background:#fff"></div><div class="fld" style="left:533px;top:623px;width:81px;height:21px;background:#fff"></div><div class="fld" style="left:616px;top:623px;width:98px;height:21px;background:#fff"></div><div class="fld" style="left:716px;top:623px;width:82px;height:21px;background:#fff"></div><div class="fld" style="left:800px;top:623px;width:55px;height:21px;background:#fff"></div><div class="fld" style="left:857px;top:623px;width:82px;height:21px;background:#fff"></div><div class="fld" style="left:941px;top:623px;width:73px;height:21px;background:#fff"></div><div class="fld" style="left:1016px;top:623px;width:43px;height:21px;background:#fff"></div><div class="fld" style="left:1061px;top:623px;width:74px;height:21px;background:#fff"></div><div class="fld" style="left:1137px;top:623px;width:72px;height:21px;background:#fff"></div><div class="fld" style="left:10px;top:647px;width:64px;height:21px;background:#fff"></div><div class="fld" style="left:76px;top:647px;width:148px;height:21px;background:#fff"></div><div class="fld" style="left:226px;top:647px;width:82px;height:21px;background:#fff"></div><div class="fld" style="left:310px;top:647px;width:221px;height:21px;background:#fff"></div><div class="fld" style="left:533px;top:647px;width:81px;height:21px;background:#fff"></div><div class="fld" style="left:616px;top:647px;width:98px;height:21px;background:#fff"></div><div class="fld" style="left:716px;top:647px;width:82px;height:21px;background:#fff"></div><div class="fld" style="left:800px;top:647px;width:55px;height:21px;background:#fff"></div><div class="fld" style="left:857px;top:647px;width:82px;height:21px;background:#fff"></div><div class="fld" style="left:941px;top:647px;width:73px;height:21px;background:#fff"></div><div class="fld" style="left:1016px;top:647px;width:43px;height:21px;background:#fff"></div><div class="fld" style="left:1061px;top:647px;width:74px;height:21px;background:#fff"></div><div class="fld" style="left:1137px;top:647px;width:72px;height:21px;background:#fff"></div><div class="fld" style="left:10px;top:670px;width:64px;height:21px;background:#fff"></div><div class="fld" style="left:76px;top:670px;width:148px;height:21px;background:#fff"></div><div class="fld" style="left:226px;top:670px;width:82px;height:21px;background:#fff"></div><div class="fld" style="left:310px;top:670px;width:221px;height:21px;background:#fff"></div><div class="fld" style="left:533px;top:670px;width:81px;height:21px;background:#fff"></div><div class="fld" style="left:616px;top:670px;width:98px;height:21px;background:#fff"></div><div class="fld" style="left:716px;top:670px;width:82px;height:21px;background:#fff"></div><div class="fld" style="left:800px;top:670px;width:55px;height:21px;background:#fff"></div><div class="fld" style="left:857px;top:670px;width:82px;height:21px;background:#fff"></div><div class="fld" style="left:941px;top:670px;width:73px;height:21px;background:#fff"></div><div class="fld" style="left:1016px;top:670px;width:43px;height:21px;background:#fff"></div><div class="fld" style="left:1061px;top:670px;width:74px;height:21px;background:#fff"></div><div class="fld" style="left:1137px;top:670px;width:72px;height:21px;background:#fff"></div><div class="vsu" style="left:1213px;top:460px;width:14px;height:13px"></div><div class="vst" style="left:1213px;top:475px;width:14px;height:203px"></div><div class="vsd" style="left:1213px;top:678px;width:14px;height:13px"></div><div class="au" style="left:1217px;top:466px"></div><div class="ad" style="left:1217px;top:683px"></div><div style="left:1223px;top:546px;width:2px;height:2px;background:#fff;box-shadow:1px 1px 0 #8d9ab4"></div><div style="left:1218px;top:550px;width:2px;height:2px;background:#fff;box-shadow:1px 1px 0 #8d9ab4"></div><div style="left:1223px;top:554px;width:2px;height:2px;background:#fff;box-shadow:1px 1px 0 #8d9ab4"></div><div style="left:1218px;top:558px;width:2px;height:2px;background:#fff;box-shadow:1px 1px 0 #8d9ab4"></div><div style="left:1223px;top:562px;width:2px;height:2px;background:#fff;box-shadow:1px 1px 0 #8d9ab4"></div><div style="left:1218px;top:566px;width:2px;height:2px;background:#fff;box-shadow:1px 1px 0 #8d9ab4"></div><div style="left:1223px;top:570px;width:2px;height:2px;background:#fff;box-shadow:1px 1px 0 #8d9ab4"></div><div style="left:1218px;top:574px;width:2px;height:2px;background:#fff;box-shadow:1px 1px 0 #8d9ab4"></div><div style="left:1223px;top:578px;width:2px;height:2px;background:#fff;box-shadow:1px 1px 0 #8d9ab4"></div><div style="left:1218px;top:582px;width:2px;height:2px;background:#fff;box-shadow:1px 1px 0 #8d9ab4"></div><div style="left:1223px;top:586px;width:2px;height:2px;background:#fff;box-shadow:1px 1px 0 #8d9ab4"></div><div style="left:1218px;top:590px;width:2px;height:2px;background:#fff;box-shadow:1px 1px 0 #8d9ab4"></div><div style="left:1223px;top:594px;width:2px;height:2px;background:#fff;box-shadow:1px 1px 0 #8d9ab4"></div><div class="t" style="left:-228px;width:300px;text-align:right;top:462px;font-size:13px;color:#000;font-weight:normal;">31</div><div class="t" style="left:79px;top:462px;font-size:13px;color:#000;font-weight:normal;">Listenpreis</div><div class="t" style="left:536px;top:462px;font-size:13px;color:#000;font-weight:normal;">Preis</div><div class="t" style="left:412px;width:300px;text-align:right;top:462px;font-size:13px;color:#000;font-weight:normal;">1</div><div class="t" style="left:497px;width:300px;text-align:right;top:462px;font-size:13px;color:#000;font-weight:normal;">1,000</div><div class="t" style="left:803px;top:462px;font-size:13px;color:#000;font-weight:normal;">LFDM</div><div class="t" style="left:861px;top:462px;font-size:13px;color:#000;font-weight:normal;">per Einheit</div><div class="t" style="left:713px;width:300px;text-align:right;top:462px;font-size:13px;color:#000;font-weight:normal;">19,98</div><div class="t" style="left:1019px;top:462px;font-size:13px;color:#000;font-weight:normal;">EUR</div><div class="t" style="left:1064px;top:462px;font-size:13px;color:#000;font-weight:normal;">30.09.2015</div>
</body></html>
